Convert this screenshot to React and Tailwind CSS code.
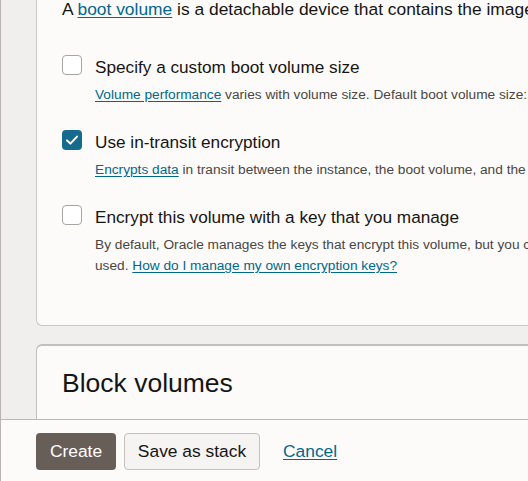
export default function App() {
  const font = { fontFamily: '"Liberation Sans", Arial, sans-serif' };
  const Check = ({ checked }) =>
    checked ? (
      <div className="w-[20px] h-[20px] shrink-0 rounded-[4px] bg-[#156b8e] flex items-center justify-center">
        <svg width="14" height="14" viewBox="0 0 14 14" fill="none">
          <path d="M2 7.4 L5.4 10.6 L12 3.6" stroke="white" strokeWidth="2" strokeLinecap="round" strokeLinejoin="round" />
        </svg>
      </div>
    ) : (
      <div className="w-[20px] h-[20px] shrink-0 rounded-[4px] border border-[#a9a5a0] bg-white" />
    );
  const Link = ({ children }) => (
    <span className="text-[#00688c] underline underline-offset-2">{children}</span>
  );
  return (
    <div style={font} className="w-[528px] h-[481px] overflow-hidden flex flex-col border-l border-[#b9b4af] text-[#161513]">
      <div className="flex-1 bg-[#f1efed] pl-[35px] flex flex-col overflow-hidden">
        <div className="h-[326px] shrink-0 bg-[#fcfbfa] border-l border-b border-[#cbc7c2] rounded-bl-[6px] pl-[25px] whitespace-nowrap overflow-hidden">
          <p className="text-[17.4px] leading-[18px]">
            A <Link>boot volume</Link> is a detachable device that contains the image used to boot the compute instance.
          </p>
          <div className="mt-[37px] flex flex-col gap-[25px]">
            <div className="flex">
              <Check />
              <div className="ml-[13px]">
                <div className="text-[17.2px] leading-[24px]">Specify a custom boot volume size</div>
                <div className="mt-[5px] text-[13.7px] leading-[21px] text-[#4a4643]">
                  <Link>Volume performance</Link> varies with volume size. Default boot volume size: 50 GB.
                </div>
              </div>
            </div>
            <div className="flex">
              <Check checked />
              <div className="ml-[13px]">
                <div className="text-[17.2px] leading-[24px]">Use in-transit encryption</div>
                <div className="mt-[5px] text-[13.7px] leading-[21px] text-[#4a4643]">
                  <Link>Encrypts data</Link> in transit between the instance, the boot volume, and the block volumes.
                </div>
              </div>
            </div>
            <div className="flex">
              <Check />
              <div className="ml-[13px]">
                <div className="text-[17.2px] leading-[24px]">Encrypt this volume with a key that you manage</div>
                <div className="mt-[5px] text-[13.7px] leading-[21px] text-[#4a4643]">
                  <div>By default, Oracle manages the keys that encrypt this volume, but you can choose a key from a vault that you have access to if you want greater control over the key's lifecycle and how it's</div>
                  <div>used. <Link>How do I manage my own encryption keys?</Link></div>
                </div>
              </div>
            </div>
          </div>
        </div>
        <div className="mt-[18px] flex-1 bg-[#fcfbfa] border-l border-t-2 border-[#c3bfba] rounded-tl-[6px] pl-[25px] pt-[21px]">
          <h2 className="text-[26.5px] leading-[32px] whitespace-nowrap">Block volumes</h2>
        </div>
      </div>
      <div className="h-[62px] shrink-0 bg-[#fcfbfa] border-t border-[#bdb8b3] pl-[35px] pt-[13px] flex items-start gap-[8px]">
        <button className="h-[37px] w-[80px] rounded-[4px] bg-[#675e58] text-white text-[17.4px]">Create</button>
        <button className="h-[37px] w-[136px] rounded-[4px] bg-[#f5f4f2] border border-[#c4c0bb] text-[#161513] text-[17.4px]">Save as stack</button>
        <button className="h-[37px] ml-[15px] text-[17.4px]"><Link>Cancel</Link></button>
      </div>
    </div>
  );
}
